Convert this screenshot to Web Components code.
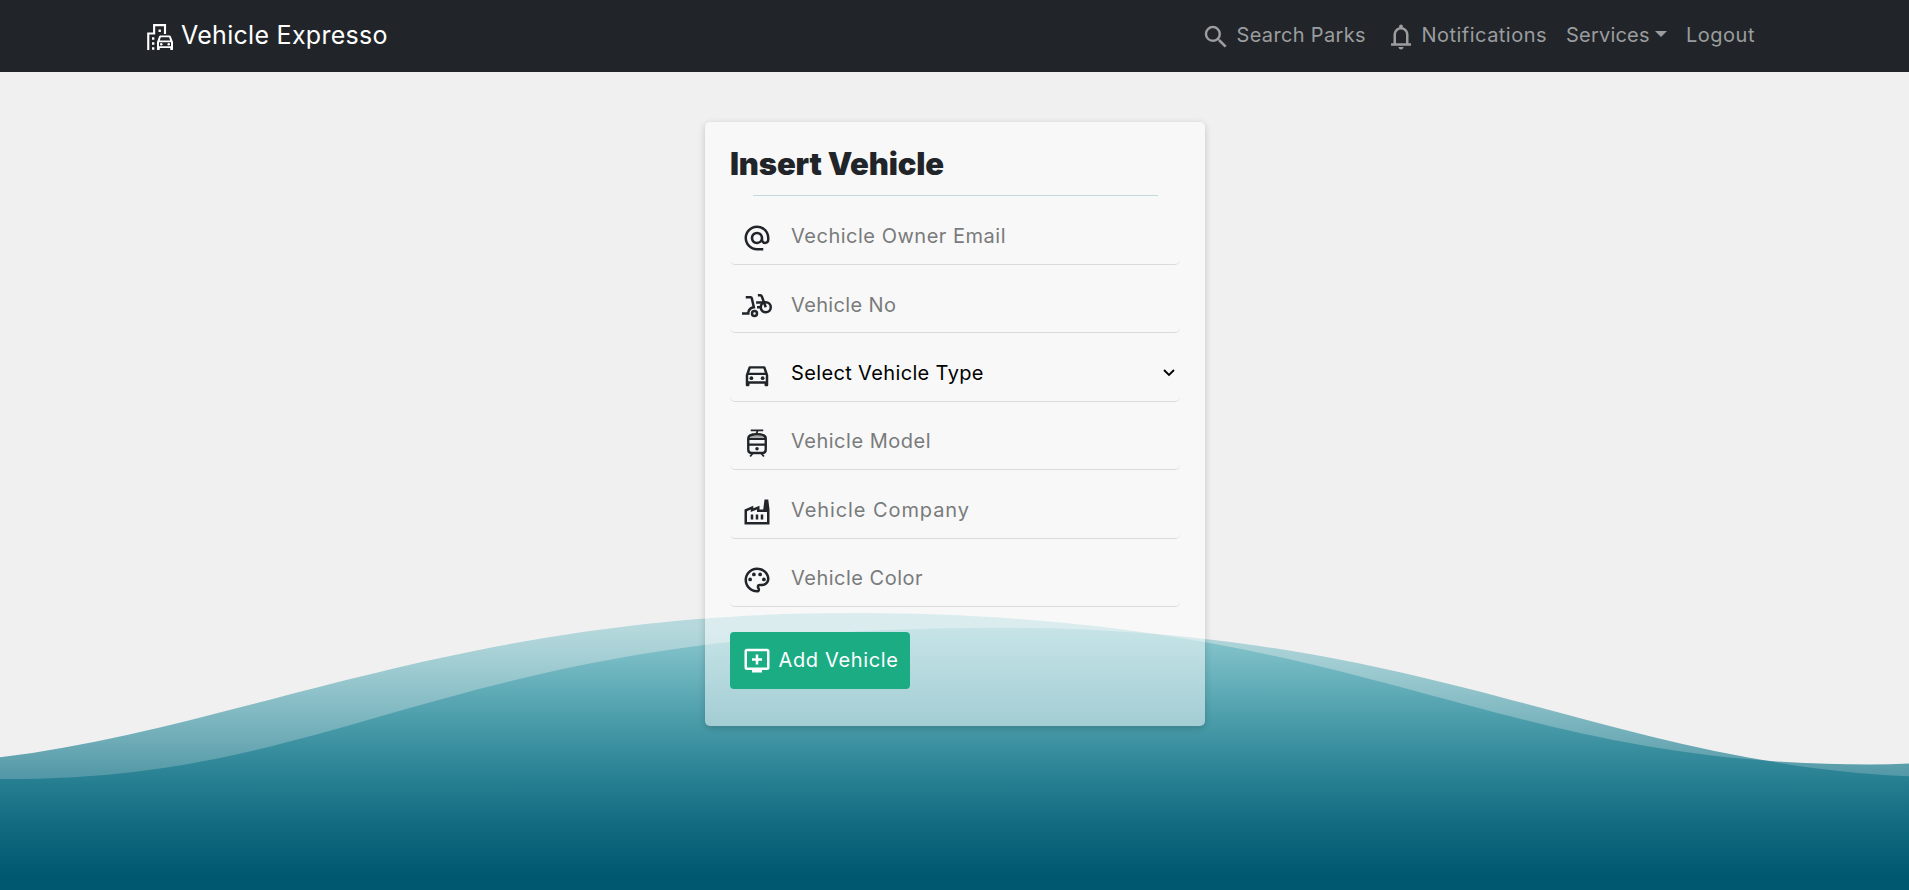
<!DOCTYPE html>
<html lang="en">
<head>
<meta charset="utf-8">
<title>Vehicle Expresso</title>
<style>
html,body{margin:0;height:100%;overflow:hidden}
body{background:#f0f0f0;color:#212529;font-family:Inter,"Open Sans",sans-serif;font-size:20px}
</style>
</head>
<body>
<vehicle-app></vehicle-app>
<script>
const dots = (list, r) => list.map(([x, y]) => `<circle cx="${x}" cy="${y}" r="${r}"/>`).join('');
const ICONS = {
  brand: `<g fill="none" stroke="currentColor" stroke-width="1.7"><path d="M2.6 22.3V9.2H7.3V2.5H16V9.6"/></g><path d="M5.6 12.2h1.9v1.9H5.6zM5.6 16.2h1.9v1.9H5.6zM5.6 20.2h1.9v1.9H5.6zM10.8 6h1.9v1.9h-1.9z"/><path fill-rule="evenodd" d="M20.7 11.6c-.2-.5-.6-.8-1.1-.8h-7.3c-.5 0-.9.3-1.1.8L9.6 16v5.7c0 .4.3.7.7.7h.8c.4 0 .7-.3.7-.7v-1h8.400v1c0 .4.3.7.7.7h.8c.4 0 .7-.3.7-.7V16zM12.600 12.200h6.700l.8 2.500h-8.300zM11.200 16.200h9.600v3.200h-9.600z"/>${dots([[13, 17.8], [19, 17.8]], 1)}`,
  search: `<path d="M15.5 14h-.79l-.28-.27A6.471 6.471 0 0 0 16 9.500 6.500 6.500 0 1 0 9.500 16c1.610 0 3.090-.590 4.230-1.570l.270.280v.790l5 4.990L20.490 19l-4.990-5zm-6 0C7.010 14 5 11.990 5 9.500S7.010 5 9.500 5 14 7.010 14 9.500 11.990 14 9.500 14z"/>`,
  bell: `<path d="M4 19v-2h2v-7q0-2.075 1.250-3.687T10.500 4.200v-.7q0-.625.438-1.062T12 2t1.063.438T13.500 3.500v.7q2 .5 3.250 2.113T18 10v7h2v2zm8 3q-.825 0-1.412-.587T10 20h4q0 .825-.587 1.413T12 22m-4-5h8v-7q0-1.650-1.175-2.825T12 6T9.175 7.175T8 10z"/>`,
  at: `<path d="M12 1.950c-5.520 0-10 4.480-10 10s4.480 10 10 10h5v-2h-5c-4.340 0-8-3.660-8-8s3.660-8 8-8 8 3.660 8 8v1.430c0 .790-.710 1.570-1.500 1.570s-1.500-.780-1.500-1.570v-1.430c0-2.760-2.240-5-5-5s-5 2.240-5 5 2.240 5 5 5c1.380 0 2.640-.560 3.540-1.470.650.890 1.770 1.470 2.960 1.470 1.970 0 3.500-1.600 3.500-3.570v-1.430c0-5.520-4.480-10-10-10zm0 13c-1.660 0-3-1.340-3-3s1.340-3 3-3 3 1.340 3 3-1.340 3-3 3z"/>`,
  scooter: `<path d="M10 14h.740L8.820 5.560A2.009 2.009 0 0 0 6.870 4H3v2h3.870l1.420 6.250h-.010A6.002 6.002 0 0 0 4.090 17H0v2h6v-1c0-2.210 1.790-4 4-4z"/><g fill="none" stroke="currentColor" stroke-width="2"><circle cx="19" cy="13" r="4"/><circle cx="10" cy="18" r="2"/><path d="M12.700 3.300H14.600Q15.500 3.300 15.800 4.200L19 13M11.300 9.200H18M12 13H15.500"/></g>`,
  car: `<path fill-rule="evenodd" d="M18.920 6.010C18.720 5.420 18.160 5 17.500 5h-11c-.660 0-1.210.420-1.420 1.010L3 12v8c0 .550.450 1 1 1h1c.550 0 1-.450 1-1v-1h12v1c0 .550.450 1 1 1h1c.550 0 1-.450 1-1v-8zM6.850 6.700h10.290l1.080 3.410H5.770zM19 17H5v-5h14z"/>${dots([[7.5, 14.5], [16.5, 14.5]], 1.5)}`,
  tram: `<g fill="none" stroke="currentColor"><path stroke-width="1.500" d="M7 1.900H17M12.600 2L11.400 4.800M8.800 20L6.500 22.800M15.200 20L17.500 22.800"/><path stroke-width="1.900" d="M5 8.200C5 5.600 8 5 12 5s7 .6 7 3.200V17.200Q19 20 16.200 20H7.800Q5 20 5 17.200ZM5 8.700H19M5 13.300H19"/><path stroke-width="1" opacity=".4" d="M6 6.900H18"/></g>${dots([[12, 16.6]], 1.4)}`,
  factory: `<path fill-rule="evenodd" d="M22 22H2V10l7-3v2l5-2v3h3l1-8h3l1 8zM12 9.950l-5 2V10l-3 1.320V20h16v-8h-8zM11 18h2v-4h-2zM7 18h2v-4H7zM15 18h2v-4h-2z"/>`,
  palette: `<path d="M12 22C6.490 22 2 17.510 2 12S6.490 2 12 2s10 4.040 10 9c0 3.310-2.690 6-6 6h-1.770c-.280 0-.5.220-.5.5 0 .120.050.230.130.330.410.470.640 1.060.640 1.670A2.500 2.500 0 0 1 12 22zm0-18c-4.410 0-8 3.590-8 8s3.590 8 8 8c.280 0 .5-.220.5-.5a.54.54 0 0 0-.140-.350c-.410-.460-.630-1.050-.630-1.650a2.500 2.500 0 0 1 2.500-2.500H16c2.210 0 4-1.790 4-4 0-3.860-3.590-7-8-7z"/>${dots([[6.5, 11.5], [9.5, 7.5], [14.5, 7.5], [17.5, 11.5]], 1.5)}`,
  add: `<rect x="3" y="4" width="18" height="15" rx="1" fill="none" stroke="currentColor" stroke-width="2"/><path d="M8 19h8v3H8zM11 7.500h2v3h3v2h-3v3h-2v-3H8v-2h3z"/>`
};

class UiIcon extends HTMLElement {
  connectedCallback() {
    this.attachShadow({mode: 'open'}).innerHTML = `<style>:host{display:block;flex:none;width:30px;height:30px}svg{display:block}</style>
      <svg width="30" height="30" viewBox="0 0 24 24" fill="currentColor">${ICONS[this.getAttribute('name')]}</svg>`;
  }
}
customElements.define('ui-icon', UiIcon);

/* A one-line label whose tracking is adjusted to fill a given width. */
class FitText extends HTMLElement {
  connectedCallback() {
    this.attachShadow({mode: 'open'}).innerHTML = `<style>:host{display:block;flex:none;white-space:nowrap;line-height:30px}span{display:inline-block}</style><span><slot></slot></span>`;
    const target = +this.getAttribute('width'), span = this.shadowRoot.querySelector('span');
    const natural = span.getBoundingClientRect().width;
    span.style.letterSpacing = (target - natural) / (this.textContent.length - 1) + 'px';
    this.style.width = target + 'px';
  }
}
customElements.define('fit-text', FitText);

class WaveBackdrop extends HTMLElement {
  connectedCallback() {
    this.attachShadow({mode: 'open'}).innerHTML = `<style>:host{position:absolute;inset:0;z-index:0}svg{display:block}</style>
      <svg width="1909" height="890" viewBox="0 0 1909 890">
      <defs><linearGradient id="sea" gradientUnits="userSpaceOnUse" x1="0" x2="0" y1="890" y2="613"><stop offset="5%" stop-color="#005870"/><stop offset="95%" stop-color="#40a9b5" stop-opacity=".33"/></linearGradient></defs>
      <path fill="url(#sea)" d="M0 757.3C250 726 461 613 850 613C1367 613 1478 764.500 1870 764.500Q1890 764.500 1909 763.500V890H0Z"/>
      <path fill="url(#sea)" d="M0 779H10C355 779 445 627.700 1000 627.700C1450 627.700 1620 777.500 1960 777.500V890H0Z"/></svg>`;
  }
}
customElements.define('wave-backdrop', WaveBackdrop);

class NavBar extends HTMLElement {
  connectedCallback() {
    this.attachShadow({mode: 'open'}).innerHTML = `<style>
      :host{display:flex;box-sizing:border-box;height:72px;padding:0 154.500px 2px 145px;align-items:center;background:#212529;color:#9b9d9f;position:relative;z-index:1}
      .brand{display:flex;align-items:center;color:#fff;gap:6px;font-size:25px}
      nav{display:flex;align-items:center;margin-left:auto}
      .item{display:flex;align-items:center;gap:6px}
      ui-icon{margin-top:4px}
      .caret{border:6px solid transparent;border-top-color:currentColor;border-bottom:0;margin-top:-2px}
    </style>
    <div class="brand"><ui-icon name="brand"></ui-icon><fit-text width="206.5">Vehicle Expresso</fit-text></div>
    <nav>
      <div class="item" style="margin-right:20px"><ui-icon name="search"></ui-icon><fit-text width="129">Search Parks</fit-text></div>
      <div class="item" style="margin-right:19.5px"><ui-icon name="bell"></ui-icon><fit-text width="125">Notifications</fit-text></div>
      <div class="item" style="margin-right:19.5px;gap:5px"><fit-text width="83.5">Services</fit-text><i class="caret"></i></div>
      <div class="item"><fit-text width="68.5">Logout</fit-text></div>
    </nav>`;
  }
}
customElements.define('nav-bar', NavBar);

class FormField extends HTMLElement {
  connectedCallback() {
    const select = this.hasAttribute('select');
    this.attachShadow({mode: 'open'}).innerHTML = `<style>
      :host{display:flex;align-items:center;box-sizing:border-box;height:54px;margin-bottom:14.400px;padding:0 5.500px 0 12px;border-bottom:1px solid #d9dbdc;border-radius:5px}
      ui-icon{margin-top:1px}
      .label{margin-left:19px;padding-bottom:2.600px;color:${select ? '#000' : '#797b7c'}}
      .arrow{margin-left:auto;margin-bottom:2px}
    </style><ui-icon name="${this.getAttribute('icon')}"></ui-icon><div class="label"><slot></slot></div>
    ${select ? '<svg class="arrow" width="12" height="8" viewBox="0 0 12 8" fill="none" stroke="#000" stroke-width="1.800"><path d="M1 1l5 5 5-5"/></svg>' : ''}`;
  }
}
customElements.define('form-field', FormField);

class ActionButton extends HTMLElement {
  connectedCallback() {
    this.attachShadow({mode: 'open'}).innerHTML = `<style>
      :host{display:flex;align-items:center;box-sizing:border-box;width:180px;height:57px;padding-left:12px;gap:6.500px;background:#1bac84;color:#fff;border-radius:4px}
      div{padding-bottom:1px}
    </style><ui-icon name="add"></ui-icon><div><slot></slot></div>`;
  }
}
customElements.define('action-button', ActionButton);

class VehicleCard extends HTMLElement {
  connectedCallback() {
    this.attachShadow({mode: 'open'}).innerHTML = `<style>
      :host{display:block;box-sizing:border-box;width:500px;height:604px;padding:11.500px 25px 0;background:rgba(255,255,255,.5);border-radius:5px;box-shadow:0 2px 7px rgba(0,0,0,.19)}
      h1{margin:0;height:61px;font-size:31px;font-weight:900}
      h1 fit-text{line-height:60px}
      hr{width:405px;height:1px;border:0;margin:.5px auto 15px;background:#c4d9db}
      section{display:flex;flex-direction:column;margin-bottom:-14.400px}
      action-button{margin-top:25px}
    </style>
    <h1><fit-text width="214">Insert Vehicle</fit-text></h1><hr>
    <section>
      <form-field icon="at"><fit-text width="214.5">Vechicle Owner Email</fit-text></form-field>
      <form-field icon="scooter"><fit-text width="105">Vehicle No</fit-text></form-field>
      <form-field icon="car" select><fit-text width="192.5">Select Vehicle Type</fit-text></form-field>
      <form-field icon="tram"><fit-text width="139.5">Vehicle Model</fit-text></form-field>
      <form-field icon="factory"><fit-text width="178">Vehicle Company</fit-text></form-field>
      <form-field icon="palette"><fit-text width="131.5">Vehicle Color</fit-text></form-field>
    </section>
    <action-button><fit-text width="119.5">Add Vehicle</fit-text></action-button>`;
  }
}
customElements.define('vehicle-card', VehicleCard);

class VehicleApp extends HTMLElement {
  connectedCallback() {
    this.attachShadow({mode: 'open'}).innerHTML = `<style>
      :host{display:block;position:relative;height:890px}
      main{display:flex;justify-content:center;padding-top:50px;padding-left:1px;position:relative;z-index:1}
    </style><wave-backdrop></wave-backdrop><nav-bar></nav-bar><main><vehicle-card></vehicle-card></main>`;
  }
}
customElements.define('vehicle-app', VehicleApp);
</script>
</body>
</html>
